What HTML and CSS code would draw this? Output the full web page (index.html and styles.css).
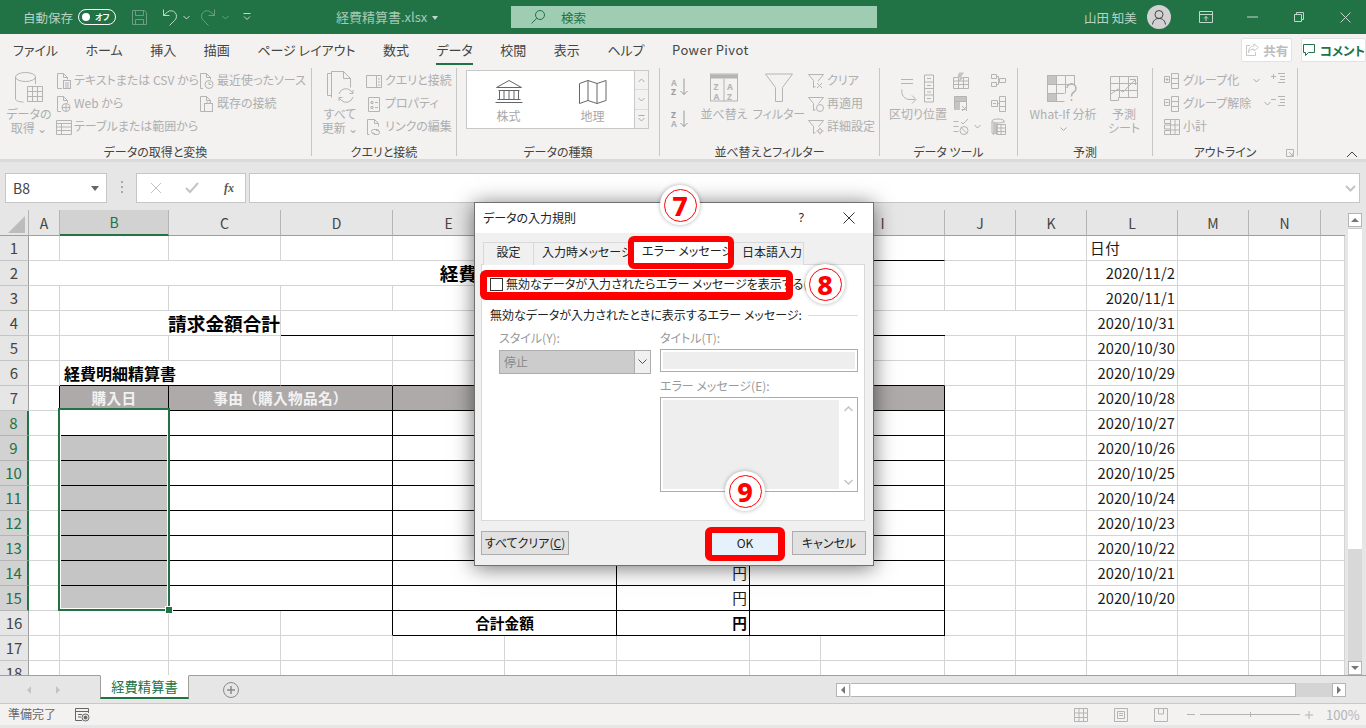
FILE: index.html
```html
<!DOCTYPE html>
<html lang="ja">
<head>
<meta charset="utf-8">
<title>経費精算書.xlsx - Excel</title>
<link rel="stylesheet" href="styles.css">
</head>
<body>
<div class="app">

<header class="titlebar">
  <span class="autosave">自動保存</span>
  <span class="toggle"><span class="dot"></span><span class="off">オフ</span></span>
  <svg class="tb save" width="17" height="17" viewBox="0 0 17 17"><path d="M1.5 1.5h12l2 2v12h-14zM4.5 1.5v5h8v-5M4.5 15.5v-5h8v5"/></svg>
  <svg class="tb undo" width="16" height="18" viewBox="0 0 16 18"><path d="M2.5 1.5v6h6M2.5 7.5l4-3.5a5.5 5.5 0 0 1 7 8.5l-5 5"/></svg>
  <svg class="chev undo-c" width="7" height="5" viewBox="0 0 7 5"><path d="M.5 1l3 3 3-3"/></svg>
  <svg class="tb redo" width="16" height="18" viewBox="0 0 16 18"><path d="M13.5 1.5v6h-6M13.5 7.5l-4-3.5a5.5 5.5 0 0 0-7 8.5l5 5"/></svg>
  <svg class="chev redo-c" width="7" height="5" viewBox="0 0 7 5"><path d="M.5 1l3 3 3-3"/></svg>
  <svg class="chev qat" width="8" height="8" viewBox="0 0 8 8"><path d="M.5.5h7M1 3.5l3 3 3-3"/></svg>
  <span class="filename">経費精算書.xlsx</span>
  <span class="file-caret"></span>
  <div class="search">
    <svg width="16" height="16" viewBox="0 0 16 16"><circle cx="10" cy="6" r="4.5"/><path d="M6.8 9.2L1.5 14.5"/></svg>
    <span>検索</span>
  </div>
  <span class="user">山田 知美</span>
  <span class="avatar"><svg width="16" height="16" viewBox="0 0 16 16"><circle cx="8" cy="5.5" r="4"/><path d="M1.5 15.5c.5-4 3-6 6.500-6s6 2 6.500 6"/></svg></span>
  <svg class="win w-opt" width="14" height="12" viewBox="0 0 14 12"><path d="M.5.5h13v11H.5zM.5 3.500h13M7 10V5.500M5 7.500l2-2 2 2"/></svg>
  <svg class="win w-min" width="11" height="2" viewBox="0 0 11 2"><path d="M0 1h11"/></svg>
  <svg class="win w-max" width="10" height="10" viewBox="0 0 10 10"><path d="M.5 2.500h7v7h-7zM2.500 2.500v-2h7v7h-2"/></svg>
  <svg class="win w-close" width="11" height="11" viewBox="0 0 11 11"><path d="M.5.5l10 10M10.500.5l-10 10"/></svg>
</header>

<nav class="tabs">
  <span>ファイル</span><span>ホーム</span><span>挿入</span><span>描画</span><span>ページ レイアウト</span><span>数式</span><span class="on">データ</span><span>校閲</span><span>表示</span><span>ヘルプ</span><span class="pp">Power Pivot</span>
  <span class="share"><svg width="14" height="14" viewBox="0 0 14 14"><path d="M9 .8l4.300 3.700L9 8V6C6 6 4.500 7 3.500 9.500 3.500 6 5 3 9 3zM5 2.500H1.500v10h9V9"/></svg>共有</span>
  <span class="comment"><svg width="14" height="14" viewBox="0 0 14 14"><path d="M1.500 1.500h11v8H6.500l-3 3v-3h-2z"/></svg>コメント</span>
</nav>

<section class="ribbon">
  <div class="group g1">
    <div class="body">
      <div class="big b-get">
        <svg class="i" width="30" height="35" viewBox="0 0 30 35"><path d="M1.500 6v22c0 1.500 3 3 8 3M21.500 6v7"/><ellipse cx="11.500" cy="6" rx="10" ry="4.500"/><path d="M13.500 15.500h15v15h-15zM13.500 20.500h15M13.500 25.500h15M18.500 15.500v15M23.500 15.500v15"/></svg>
        <span>データの</span><span>取得 ⌄</span>
      </div>
      <div class="col c-a">
        <div class="row"><svg class="i" width="18" height="18" viewBox="0 0 18 18"><path d="M7 16.500H2.500v-15h6l4 4v2M8.500 1.500v4h4"/><rect x="8.500" y="8.500" width="7" height="8"/><path d="M10 11h4M10 13h4M10 15h4"/></svg>テキストまたは CSV から</div>
        <div class="row"><svg class="i" width="18" height="18" viewBox="0 0 18 18"><path d="M6 16.500H2.500v-15h6l4 4v2M8.500 1.500v4h4"/><circle cx="11" cy="12.500" r="4"/><path d="M7 12.500h8M11 8.500v8"/></svg>Web から</div>
        <div class="row"><svg class="i" width="18" height="18" viewBox="0 0 18 18"><path d="M1.500 2.500h15v14h-15zM1.500 5.500h15M1.500 9h15M1.500 12.500h15M6.500 5.500v11"/></svg>テーブルまたは範囲から</div>
      </div>
      <div class="col c-b">
        <div class="row"><svg class="i" width="18" height="18" viewBox="0 0 18 18"><path d="M5 16.500H2.500v-15h6l4 4v2M8.500 1.500v4h4"/><circle cx="11" cy="12.500" r="4"/><path d="M11 10v2.500h2"/></svg>最近使ったソース</div>
        <div class="row"><svg class="i" width="18" height="18" viewBox="0 0 18 18"><path d="M6 16.500H2.500v-15h6l4 4v2M8.500 1.500v4h4"/><rect x="6.500" y="8.500" width="8" height="8"/><path d="M9 8.500v-2M12 8.500v-2"/></svg>既存の接続</div>
      </div>
    </div>
    <div class="glabel">データの取得と変換</div>
  </div>

  <div class="group g2">
    <div class="body">
      <div class="big b-refresh">
        <svg class="i" width="30" height="35" viewBox="0 0 30 35"><path d="M5.500 24.500H1.500v-22h4M5.500 26.500v-26h12l7 7v9M17.500.5v7h7"/><path d="M13 23a7 7 0 0 1 12-3l2 2M27 19v3.500h-3.500M27 26a7 7 0 0 1-12 3l-2-2M13 30v-3.500h3.500"/></svg>
        <span>すべて</span><span>更新 ⌄</span>
      </div>
      <div class="col c-q">
        <div class="row"><svg class="i" width="19" height="18" viewBox="0 0 19 18"><path d="M1.500 3.500h15v12h-15zM11.500 3.500v12M13 7h2M13 10h2M13 13h2"/></svg>クエリと接続</div>
        <div class="row"><svg class="i" width="19" height="18" viewBox="0 0 19 18"><path d="M3.500 2.500h11v14h-11zM6 6.500h2v2H6zM6 11.500h2v2H6zM10 7.500h3M10 12.500h3"/></svg>プロパティ</div>
        <div class="row"><svg class="i" width="19" height="18" viewBox="0 0 19 18"><path d="M4.500 16.500h-2v-15h7l4 4v3M9.500 1.500v4h4"/><path d="M9 14.500H7.500a2 2 0 0 1 0-4H11a2 2 0 0 1 2 2M10 11.500h1.500a2 2 0 0 1 0 4H9a2 2 0 0 1-2-2" transform="translate(1 1)"/></svg>リンクの編集</div>
      </div>
    </div>
    <div class="glabel">クエリと接続</div>
  </div>

  <div class="group g3">
    <div class="body">
      <div class="gallery">
        <div class="gitem">
          <svg width="28" height="24" viewBox="0 0 28 24"><path d="M14 .5L1.500 7.500h25zM4 7.500V8M3.500 10.500h21M4.500 10.500v9M9 10.500v9M14 10.500v9M19 10.500v9M23.500 10.500v9M2.500 19.500h23M.5 22.500h27"/></svg>
          <span>株式</span>
        </div>
        <div class="gitem">
          <svg width="28" height="24" viewBox="0 0 28 24"><path d="M.5 3.500l8.500-3 9 3 9-3v20l-9 3-9-3-8.500 3zM9 .5v20M18 3.500v20"/></svg>
          <span>地理</span>
        </div>
      </div>
      <div class="gscroll">
        <span><svg class="ch" width="7" height="5" viewBox="0 0 7 5"><path d="M.5 4l3-3 3 3"/></svg></span>
        <span><svg class="ch" width="7" height="5" viewBox="0 0 7 5"><path d="M.5 1l3 3 3-3"/></svg></span>
        <span><svg class="ch" width="7" height="7" viewBox="0 0 7 7"><path d="M.5.5h6M.5 3l3 3 3-3"/></svg></span>
      </div>
    </div>
    <div class="glabel">データの種類</div>
  </div>

  <div class="group g4">
    <div class="body">
      <div class="sort">
        <svg width="18" height="18" viewBox="0 0 18 18"><text x="0" y="8" class="st">A</text><text x="0" y="17" class="st dark">Z</text><path class="ar" d="M13 .5v16M9.500 13l3.500 3.500 3.500-3.500"/></svg>
        <svg width="18" height="18" viewBox="0 0 18 18"><text x="0" y="8" class="st dark">Z</text><text x="0" y="17" class="st">A</text><path class="ar" d="M13 .5v16M9.500 13l3.500 3.500 3.500-3.500"/></svg>
      </div>
      <div class="big b-sort">
        <svg width="28" height="30" viewBox="0 0 28 30"><rect x=".5" y=".5" width="27" height="27" fill="none" stroke="#b4b4b4"/><rect x="1" y="1" width="26" height="4" fill="#b4b4b4"/><path d="M14 5v23" stroke="#b4b4b4"/><text x="3.500" y="16" class="st">Z</text><text x="17" y="16" class="st">A</text><text x="3.500" y="26" class="st">A</text><text x="17" y="26" class="st">Z</text></svg>
        <span>並べ替え</span>
      </div>
      <div class="vsep"></div>
      <div class="big b-filter">
        <svg class="i" width="28" height="30" viewBox="0 0 28 30"><path d="M.5.5h27L17.500 14v14h-7V14z"/></svg>
        <span>フィルター</span>
      </div>
      <div class="col c-f">
        <div class="row"><svg class="i" width="19" height="18" viewBox="0 0 19 18"><path d="M1.500 2.500h15l-5 6v1M1.500 2.500l5 6v7l2-1M10 11l5 5M15 11l-5 5"/></svg>クリア</div>
        <div class="row"><svg class="i" width="19" height="18" viewBox="0 0 19 18"><path d="M1.500 2.500h15l-5 6M1.500 2.500l5 6v7l2-1"/><circle cx="13" cy="13" r="3.500"/></svg>再適用</div>
        <div class="row"><svg class="i" width="19" height="18" viewBox="0 0 19 18"><path d="M1.500 2.500h15l-5 6M1.500 2.500l5 6v7l2-1"/><circle cx="13" cy="13" r="2"/><path d="M13 9.500v1.500M13 15v1.500M9.500 13H11M15 13h1.500"/></svg>詳細設定</div>
      </div>
    </div>
    <div class="glabel">並べ替えとフィルター</div>
  </div>

  <div class="group g5">
    <div class="body">
      <div class="big b-split">
        <svg class="i" width="36" height="30" viewBox="0 0 36 30"><path d="M1 6h12M1 10h12M24.500 1.500h9v27h-9zM24.500 8.500h9M24.500 15h9M24.500 21.500h9M27 5h4M27 12h4M27 18.500h4M27 25h4M2 16a8 8 0 0 0 8 10h5M12 22l4 4-4 4"/></svg>
        <span>区切り位置</span>
      </div>
      <div class="col c-t1">
        <div class="row"><svg class="i" width="17" height="18" viewBox="0 0 17 18"><path d="M1.500 5.500h15v11h-15zM1.500 9h15M1.500 12.500h15M6.500 5.500v11M11.500 5.500v11"/><path class="fl" d="M7 .5h5L9 5h3l-6 6 2-5H5z"/></svg></div>
        <div class="row"><svg class="i" width="17" height="18" viewBox="0 0 17 18"><path d="M2.500 1.500h12v13h-5M2.500 1.500v13h4M2.500 6.500h12"/><rect class="fl" x="3" y="2" width="11" height="4"/><rect class="fl" x="3" y="7" width="5" height="8"/><path d="M10 11l5 5M15 11l-5 5"/></svg></div>
        <div class="row"><svg class="i" width="17" height="18" viewBox="0 0 17 18"><path d="M1.500 3.500h5M1.500 8.500h5M1.500 13.500h5M9 4l2 2 5-5"/><circle cx="12" cy="12.500" r="4"/><path d="M9.200 9.700l5.600 5.600"/></svg><svg class="ch caret-t" width="7" height="5" viewBox="0 0 7 5"><path d="M.5 1l3 3 3-3"/></svg></div>
      </div>
      <div class="col c-t2">
        <div class="row"><svg class="i" width="17" height="18" viewBox="0 0 17 18"><path d="M1.500 2.500h5v4h-5zM1.500 10.500h5v4h-5zM9.500 6.500h6v4h-6zM6.500 4.500h2v4M6.500 12.500h2v-4"/></svg></div>
        <div class="row"><svg class="i" width="17" height="18" viewBox="0 0 17 18"><path d="M1.500 5.500h6v6h-6zM9.500 1.500h6v15h-6zM9.500 6.500h6M9.500 11.500h6M7.500 8.500h2M3 8.500h3"/></svg></div>
        <div class="row"><svg class="i" width="17" height="18" viewBox="0 0 17 18"><ellipse cx="8" cy="3" rx="6" ry="2"/><path d="M2 3v12l2 2M14 3v2"/><rect class="fl" x="3" y="5" width="5" height="11"/><path d="M6.500 6.500h9v10h-9zM6.500 10h9M6.500 13.500h9M11 6.500v10"/></svg></div>
      </div>
    </div>
    <div class="glabel">データ ツール</div>
  </div>

  <div class="group g6">
    <div class="body">
      <div class="big b-what">
        <svg width="32" height="30" viewBox="0 0 32 30"><rect class="sq" x="0" y="0" width="9" height="9"/><rect class="sq" x="0" y="18" width="9" height="9"/><path fill="none" stroke="#b4b4b4" d="M.5.500h27v9h-9v9M.5.500v26h17M.5 9.500h18M.5 18.500h17M9.500.500v26M18.500.500v9M27.500.500v9"/><path fill="none" stroke="#b4b4b4" stroke-width="1.500" d="M20 13a4.500 4.500 0 1 1 7 4c-2 1-2.500 2-2.500 4.500M24.500 24v2"/></svg>
        <span>What-If 分析</span><span class="caretline"><svg class="ch" width="7" height="5" viewBox="0 0 7 5"><path d="M.5 1l3 3 3-3"/></svg></span>
      </div>
      <div class="big b-fcst">
        <svg class="i" width="28" height="26" viewBox="0 0 28 26"><path d="M.5.500h27v21h-19v3h-8zM.5 7.500h27M.5 14.500h27M9.500.500v21M18.500.500v21M1 18l7-5 5 3 12-12M20 3.500h5.500V9"/></svg>
        <span>予測</span><span>シート</span>
      </div>
    </div>
    <div class="glabel">予測</div>
  </div>

  <div class="group g7">
    <div class="body">
      <div class="col c-o1">
        <div class="row"><svg class="i" width="18" height="18" viewBox="0 0 18 18"><path d="M1.500 4.500h5v6h-5zM4 7.500h0M2.500 7.500h3M4 6v3M8.500 1.500h7v15h-7zM8.500 6.500h7M8.500 11.500h7"/></svg>グループ化<svg class="ch caret-o1" width="7" height="5" viewBox="0 0 7 5"><path d="M.5 1l3 3 3-3"/></svg></div>
        <div class="row"><svg class="i" width="18" height="18" viewBox="0 0 18 18"><path d="M1.500 4.500h5v6h-5zM2.500 7.500h3M8.500 1.500h7v15h-7zM8.500 6.500h7M8.500 11.500h7"/></svg>グループ解除<svg class="ch caret-o2" width="7" height="5" viewBox="0 0 7 5"><path d="M.5 1l3 3 3-3"/></svg></div>
        <div class="row"><svg class="i" width="18" height="18" viewBox="0 0 18 18"><path d="M1.500 1.500h6v4h-6zM1.500 7h6v4h-6zM1.500 12.500h6v4h-6zM7.500 1.500h9v15h-9zM7.500 7h9M7.500 12h9M12 1.500v15"/></svg>小計</div>
      </div>
      <div class="col c-o2">
        <div class="row"><svg class="i" width="15" height="14" viewBox="0 0 15 14"><path d="M0 4.500h5M2.500 2v5M7 1.500h7M9 4.500h5M9 7.500h5M7 10.500h7"/></svg></div>
        <div class="row"><svg class="i" width="15" height="14" viewBox="0 0 15 14"><path d="M0 4.500h5M7 1.500h7M9 4.500h5M9 7.500h5M7 10.500h7"/></svg></div>
      </div>
    </div>
    <div class="glabel">アウトライン</div>
    <svg class="launcher" width="8" height="8" viewBox="0 0 8 8"><path d="M.5 7.500v-7h7v7zM3 3l4 4M7 4v3H4"/></svg>
  </div>
  <svg class="collapse" width="12" height="7" viewBox="0 0 12 7"><path d="M1 6l5-5 5 5"/></svg>
</section>

<section class="fbar">
  <div class="namebox"><span>B8</span><i></i></div>
  <div class="dots"><i></i><i></i><i></i></div>
  <div class="fxbox">
    <svg width="12" height="12" viewBox="0 0 12 12"><path d="M1 1l10 10M11 1L1 11"/></svg>
    <svg width="14" height="12" viewBox="0 0 14 12"><path d="M1 6l4 4 8-9" stroke-width="2"/></svg>
    <em>fx</em>
  </div>
  <div class="finput"><svg class="ch" width="11" height="7" viewBox="0 0 11 7"><path d="M1 1l4.500 4.500L10 1" stroke-width="2"/></svg></div>
</section>

<section class="sheetrow">
  <div class="gridwrap">
    <table class="grid">
      <colgroup><col class="w29"><col class="w31"><col class="w109"><col class="w112"><col class="w112"><col class="w112"><col class="w112"><col class="w133"><col class="w71"><col class="w124"><col class="w71"><col class="w71"><col class="w91"><col class="w71"><col class="w72"><col class="w24"></colgroup>
      <tr class="ch-row"><th class="corner"><svg width="18" height="17" viewBox="0 0 18 17"><path d="M17 0v17H0z" fill="#bcbcbc"/></svg></th><th>A</th><th class="cur">B</th><th>C</th><th>D</th><th>E</th><th>F</th><th>G</th><th>H</th><th>I</th><th>J</th><th>K</th><th>L</th><th>M</th><th>N</th><th></th></tr>
      <tr><th>1</th><td></td><td></td><td></td><td></td><td></td><td></td><td></td><td></td><td class="bb"></td><td></td><td></td><td class="pad">日付</td><td></td><td></td><td></td></tr>
      <tr><th>2</th><td colspan="9" class="title">経費精算書</td><td></td><td></td><td class="num">2020/11/2</td><td></td><td></td><td></td></tr>
      <tr><th>3</th><td></td><td></td><td></td><td></td><td></td><td></td><td></td><td></td><td></td><td></td><td></td><td class="num">2020/11/1</td><td></td><td></td><td></td></tr>
      <tr><th>4</th><td></td><td colspan="2" class="total">請求金額合計</td><td colspan="6" class="bb nr"></td><td colspan="2"></td><td class="num">2020/10/31</td><td></td><td></td><td></td></tr>
      <tr><th>5</th><td></td><td></td><td></td><td></td><td></td><td></td><td></td><td></td><td></td><td></td><td></td><td class="num">2020/10/30</td><td></td><td></td><td></td></tr>
      <tr><th>6</th><td></td><td colspan="2" class="bb sub">経費明細精算書</td><td class="bb"></td><td class="bb"></td><td class="bb"></td><td class="bb"></td><td class="bb"></td><td class="bb"></td><td></td><td></td><td class="num">2020/10/29</td><td></td><td></td><td></td></tr>
      <tr><th>7</th><td class="br"></td><td class="hd">購入日</td><td colspan="2" class="hd">事由（購入物品名）</td><td colspan="2" class="hd"></td><td class="hd"></td><td colspan="2" class="hd"></td><td></td><td></td><td class="num">2020/10/28</td><td></td><td></td><td></td></tr>
      <tr class="sel"><th>8</th><td class="br"></td><td class="box"></td><td colspan="2" class="box"></td><td colspan="2" class="box"></td><td class="box"></td><td colspan="2" class="box"></td><td></td><td></td><td class="num">2020/10/27</td><td></td><td></td><td></td></tr>
      <tr class="sel"><th>9</th><td class="br"></td><td class="box fillc"></td><td colspan="2" class="box"></td><td colspan="2" class="box"></td><td class="box"></td><td colspan="2" class="box"></td><td></td><td></td><td class="num">2020/10/26</td><td></td><td></td><td></td></tr>
      <tr class="sel"><th>10</th><td class="br"></td><td class="box fillc"></td><td colspan="2" class="box"></td><td colspan="2" class="box"></td><td class="box"></td><td colspan="2" class="box"></td><td></td><td></td><td class="num">2020/10/25</td><td></td><td></td><td></td></tr>
      <tr class="sel"><th>11</th><td class="br"></td><td class="box fillc"></td><td colspan="2" class="box"></td><td colspan="2" class="box"></td><td class="box"></td><td colspan="2" class="box"></td><td></td><td></td><td class="num">2020/10/24</td><td></td><td></td><td></td></tr>
      <tr class="sel"><th>12</th><td class="br"></td><td class="box fillc"></td><td colspan="2" class="box"></td><td colspan="2" class="box"></td><td class="box"></td><td colspan="2" class="box"></td><td></td><td></td><td class="num">2020/10/23</td><td></td><td></td><td></td></tr>
      <tr class="sel"><th>13</th><td class="br"></td><td class="box fillc"></td><td colspan="2" class="box"></td><td colspan="2" class="box"></td><td class="box"></td><td colspan="2" class="box"></td><td></td><td></td><td class="num">2020/10/22</td><td></td><td></td><td></td></tr>
      <tr class="sel"><th>14</th><td class="br"></td><td class="box fillc"></td><td colspan="2" class="box"></td><td colspan="2" class="box"></td><td class="box num">円</td><td colspan="2" class="box"></td><td></td><td></td><td class="num">2020/10/21</td><td></td><td></td><td></td></tr>
      <tr class="sel"><th>15</th><td class="br"></td><td class="box fillc"></td><td colspan="2" class="box"></td><td colspan="2" class="box"></td><td class="box num">円</td><td colspan="2" class="box"></td><td></td><td></td><td class="num">2020/10/20</td><td></td><td></td><td></td></tr>
      <tr><th>16</th><td></td><td></td><td></td><td class="br"></td><td colspan="2" class="box strong">合計金額</td><td class="box num strong">円</td><td colspan="2" class="box"></td><td></td><td></td><td></td><td></td><td></td><td></td></tr>
      <tr><th>17</th><td></td><td></td><td></td><td></td><td></td><td></td><td></td><td></td><td></td><td></td><td></td><td></td><td></td><td></td><td></td></tr>
      <tr><th>18</th><td></td><td></td><td></td><td></td><td></td><td></td><td></td><td></td><td></td><td></td><td></td><td></td><td></td><td></td><td></td></tr>
    </table>
    <div class="selection"><i></i></div>
  </div>
  <div class="vscroll">
    <span class="sbtn"><b class="tri up"></b></span>
    <span class="vthumb"></span>
    <span class="sbtn"><b class="tri down"></b></span>
  </div>
</section>

<section class="tabbar">
  <span class="nav"><b class="tri left"></b></span>
  <span class="nav"><b class="tri right"></b></span>
  <span class="sheet-tab">経費精算書</span>
  <svg class="plus" width="18" height="18" viewBox="0 0 18 18"><circle cx="9" cy="9" r="7.500"/><path d="M5 9h8M9 5v8" stroke-width="1.500"/></svg>
  <div class="hscroll">
    <span class="sbtn"><b class="tri left dk"></b></span>
    <span class="hthumb"></span>
    <span class="htrack"></span>
    <span class="sbtn"><b class="tri right dk"></b></span>
  </div>
</section>

<footer class="status">
  <span class="ready">準備完了</span>
  <svg class="macro" width="15" height="15" viewBox="0 0 15 15"><path d="M7 13.500H.5V1.500h13V6M.5 4.500h13M3 7.500h4M3 10h3"/><circle cx="10.500" cy="10.500" r="3.500"/><circle cx="10.500" cy="10.500" r="1.500" fill="#666"/></svg>
  <svg class="view v1" width="14" height="14" viewBox="0 0 14 14"><path d="M.5.5h13v13H.5zM.5 5h13M.5 9.500h13M5 .5v13M9.500.5v13"/></svg>
  <svg class="view v2" width="14" height="14" viewBox="0 0 14 14"><path d="M.5.5h13v13H.5zM3.500 3.500h7v7h-7zM5 5.500h4M5 7.500h4"/></svg>
  <svg class="view v3" width="14" height="14" viewBox="0 0 14 14"><path d="M.5.5h13v13H.5zM4.500.5v5.500h5V.5"/></svg>
  <span class="zoomctl">
    <i class="zminus"></i>
    <span class="zline"><i></i></span>
    <svg class="view" width="8" height="8" viewBox="0 0 8 8"><path d="M0 4h8M4 0v8"/></svg>
  </span>
  <span class="pct">100%</span>
</footer>

<div class="dialog">
  <div class="dtitle">
    <span>データの入力規則</span>
    <b class="help">?</b>
    <svg width="12" height="12" viewBox="0 0 12 12"><path d="M.5.5l11 11M11.500.5l-11 11"/></svg>
  </div>
  <div class="dtabs">
    <span>設定</span><span>入力時メッセージ</span><span class="active">エラー メッセージ</span><span>日本語入力</span>
  </div>
  <div class="pane">
    <label class="check"><i></i><span>無効なデータが入力されたらエラー メッセージを表示する(<u>S</u>)</span></label>
    <div class="legend"><span>無効なデータが入力されたときに表示するエラー メッセージ:</span><i></i></div>
    <div class="fields">
      <div class="fcol">
        <span class="flabel">スタイル(Y):</span>
        <div class="select"><span>停止</span><b><svg class="dk" width="9" height="6" viewBox="0 0 9 6"><path d="M.5.5l4 4 4-4"/></svg></b></div>
      </div>
      <div class="fcol">
        <span class="flabel">タイトル(T):</span>
        <div class="input"></div>
        <span class="flabel second">エラー メッセージ(E):</span>
        <div class="textarea"><span class="tsb"><svg class="ch" width="9" height="6" viewBox="0 0 9 6"><path d="M.5 5l4-4 4 4" stroke-width="1.500"/></svg><svg class="ch" width="9" height="6" viewBox="0 0 9 6"><path d="M.5 1l4 4 4-4" stroke-width="1.500"/></svg></span></div>
      </div>
    </div>
  </div>
  <div class="dbuttons">
    <button class="btn clear">すべてクリア(<u>C</u>)</button>
    <button class="btn ok">OK</button>
    <button class="btn cancel">キャンセル</button>
  </div>
  <span class="frame f-tab"></span>
  <span class="frame f-check"></span>
  <span class="frame f-ok"></span>
  <span class="marker m7"><span>7</span></span>
  <span class="marker m8"><span>8</span></span>
  <span class="marker m9"><span>9</span></span>
</div>

</div>
</body>
</html>
```
FILE: styles.css
```css
*{box-sizing:border-box}
html,body{margin:0;padding:0;height:728px;overflow:hidden}
body{font:12px/1.2 "Noto Sans CJK JP","Noto Sans",sans-serif;font-feature-settings:"palt";background:#e6e6e6;color:#444}
.app{position:relative;width:1366px;height:728px;display:flex;flex-direction:column;overflow:hidden}
svg{display:block;flex:none;fill:none}

/* title bar */
.titlebar{height:34px;flex:none;background:#217346;display:flex;align-items:center;color:#b8d2c4;font-size:12.5px;padding-left:23px}
.autosave{width:48px;white-space:nowrap;letter-spacing:0}
.toggle{margin-left:7px;width:38px;height:16px;border:1.5px solid #fff;border-radius:8px;display:flex;align-items:center;padding-left:3px;color:#fff;font-size:8px;font-weight:700}
.dot{width:8px;height:8px;border-radius:50%;background:#fff;margin-right:5px}
.tb{stroke:#6c9e84}
.save{margin-left:15px}
.undo{margin-left:13px;stroke:#c3d8cc}
.undo-c{margin-left:6px;stroke:#c3d8cc}
.redo{margin-left:11px}
.redo-c{margin-left:5px;stroke:#6c9e84}
.qat{margin-left:14px;stroke:#c3d8cc}
.filename{margin-left:85px;width:90px;white-space:nowrap;color:#a8c9b7;font-size:13px}
.file-caret{margin-left:6px;border:3px solid transparent;border-top:4px solid #c3d8cc;margin-top:4px}
.search{margin-left:73px;width:366px;height:22px;background:#9fcdb3;display:flex;align-items:center;padding-left:19px;color:#217346}
.search svg{stroke:#217346;margin-right:15px}
.user{margin-left:207px;width:54px;white-space:nowrap;color:#b8d2c4;font-size:12.5px}
.avatar{margin-left:9px;width:24px;height:24px;border-radius:50%;background:#d2d2d2;display:flex;align-items:center;justify-content:center;stroke:#444}
.avatar svg{stroke:#444}
.win{stroke:#c3d8cc}
.w-opt{margin-left:28px}
.w-min{margin-left:34px}
.w-max{margin-left:36px}
.w-close{margin-left:36px}

/* tab strip */
.tabs{height:32px;flex:none;background:#f3f2f1;display:flex;align-items:center;gap:27.500px;padding-left:13px;font-size:13px;color:#444;white-space:nowrap}
.tabs .on{position:relative}
.tabs .on::after{content:"";position:absolute;left:0;right:0;bottom:-7px;height:2px;background:#217346}
.pp{letter-spacing:.4px}
.share,.comment{display:flex;align-items:center;gap:4px;height:24px;border:1px solid #e2e2e2;border-radius:2px;background:#fff;font-size:12.500px;font-weight:700;justify-content:center}
.share{margin-left:465px;width:60px;color:#bdbdbd;stroke:#c8c8c8}
.share svg{stroke:#c8c8c8}
.comment{margin-left:-19px;width:74px;color:#217346}
.comment svg{stroke:#217346}

/* ribbon */
.ribbon{position:relative;height:96px;flex:none;background:#f3f2f1;padding-top:2px;display:flex;align-items:flex-start;border-bottom:3px solid #dadada;color:#aeaeae}
.group{position:relative;height:88px;border-right:1px solid #c8c6c4;display:flex;flex-direction:column;flex:none}
.g1{width:312px}.g2{width:145px}.g3{width:203px}.g4{width:220px}.g5{width:138px}.g6{width:135px}.g7{width:145px}
.body{height:76px;display:flex;flex:none}
.glabel{height:12px;line-height:16px;text-align:center;color:#444;white-space:nowrap;font-size:12px}
.big{display:flex;flex-direction:column;align-items:center;padding-top:3px;line-height:14px;white-space:nowrap;flex:none}
.big svg{margin-bottom:1px;height:35px}
.col{display:flex;flex-direction:column;padding-top:1px;flex:none}
.row{height:23px;display:flex;align-items:center;gap:1px;white-space:nowrap;position:relative}
.i{stroke:#b4b4b4}
.i .fl,.fl{fill:#c4c4c4;stroke:none}
.ch{stroke:#aaa}
.caret-t{margin-left:4px}
.caret-o1{margin-left:12px}
.caret-o2{margin-left:11px}
.b-get{width:52px;margin-left:3px}
.c-a{width:143px}
.c-b{width:110px}
.b-refresh{width:52px;margin-left:2px}
.b-refresh svg{margin-left:2px}
.c-q{margin-left:-1px;width:88px}
.gallery{margin:2px 0 0 9px;width:169px;height:59px;background:#fff;border:1px solid #c8c8c8;display:flex}
.gitem{width:83px;display:flex;flex-direction:column;align-items:center;padding-top:9px;color:#a8a8a8;font-size:12px}
.gitem svg{stroke:#666;margin-bottom:5px}
.gallery .gitem:last-child{margin-left:1px}
.gscroll{margin-top:2px;width:14px;height:59px;display:flex;flex-direction:column;border:1px solid #c8c8c8;border-left:0;background:#f3f2f1}
.gscroll span{flex:1;display:flex;align-items:center;justify-content:center;border-bottom:1px solid #dcdcdc}
.gscroll span:last-child{border-bottom:0}
.sort{margin-left:11px;padding-top:10px;display:flex;flex-direction:column;gap:14px;width:18px}
.st{font:700 8.500px "Noto Sans",sans-serif;fill:#b4b4b4}
.st.dark{fill:#9a9a9a}
.ar{stroke:#9a9a9a;fill:none}
.b-sort{margin-left:13px;width:44px}
.vsep{width:1px;height:59px;margin:6px 5px 0 5px;background:#d0d0d0}
.b-filter{width:56px;margin-left:-5px}
.c-f{width:80px}
.b-split{width:68px;margin-left:4px}
.b-split svg{width:36px}
.c-t1{width:38px}
.c-t2{width:17px}
.b-what{width:80px;margin-left:5px}
.b-what svg{height:35px;padding-top:3px}
.sq{fill:#c4c4c4}
.caretline{height:14px;display:flex;align-items:center}
.b-fcst{width:42px}
.b-fcst svg{height:35px;padding-top:1px}
.c-o1{margin-left:10px;width:108px}
.c-o1 .row{gap:2px}
.c-o2 .row{align-items:flex-start;padding-top:3px}
.launcher{position:absolute;right:3px;bottom:-1px;stroke:#b4b4b4}
.collapse{position:absolute;right:8px;top:85px;stroke:#444}

/* formula bar */
.fbar{height:48px;flex:none;background:#e6e6e6;display:flex;padding-top:11px;align-items:flex-start}
.namebox{margin-left:5px;width:102px;height:30px;background:#fff;border:1px solid #c6c6c6;display:flex;align-items:center;justify-content:space-between;padding:0 7px;font-size:14px;color:#444}
.namebox i{border:4px solid transparent;border-top:5px solid #666;margin-top:4px}
.dots{margin:8px 12px 0 13px;width:4px;display:flex;flex-direction:column;gap:3px;align-items:center}
.dots i{width:2px;height:2px;background:#a8a8a8}
.fxbox{width:110px;height:30px;background:#fff;border:1px solid #c6c6c6;display:flex;align-items:center;padding-left:13px;gap:23px}
.fxbox svg{stroke:#c4c4c4}
.fxbox em{font:italic 700 12px "Liberation Serif",serif;color:#555;margin-left:2px}
.finput{margin-left:3px;width:1111px;height:30px;background:#fff;border:1px solid #c6c6c6;display:flex;align-items:center;justify-content:flex-end;padding-right:3px}
.finput .ch{stroke:#c4c4c4}

/* sheet */
.sheetrow{height:465px;flex:none;display:flex}
.gridwrap{position:relative;width:1345px;height:465px;overflow:hidden;background:#fff}
.grid{border-collapse:separate;border-spacing:0;table-layout:fixed;width:1345px;font-size:14.670px;font-feature-settings:normal;color:#1a1a1a}
.w29{width:29px}.w31{width:31px}.w109{width:109px}.w112{width:112px}.w133{width:133px}.w71{width:71px}.w124{width:124px}.w91{width:91px}.w72{width:72px}.w24{width:24px}
.grid th,.grid td{height:25px;padding:0;line-height:24px;overflow:hidden;white-space:nowrap}
.grid td{border-right:1px solid #d4d4d4;border-bottom:1px solid #d4d4d4}
.grid th{background:#e6e6e6;font-weight:400;font-size:15px;color:#444;border-right:1px solid #9f9f9f;border-bottom:1px solid #c4c4c4}
.ch-row th{border-right:1px solid #b4b4b4;border-bottom:1px solid #9f9f9f;font-size:14px}
.ch-row th:last-child{border-right:0}
.ch-row{background:#e6e6e6}
.corner svg{margin:4px 0 0 8px}
.cur{background:#d2d2d2!important;color:#217346!important;border-bottom:2px solid #217346!important}
.sel th{background:#d2d2d2;color:#217346;border-right:2px solid #217346;border-bottom-color:#b4b4b4}
.grid .bb{border-bottom:1px solid #000}
.grid .br{border-right:1px solid #000}
.grid .nr{border-right:0}
.grid .box{border-right:1px solid #000;border-bottom:1px solid #000}
.grid .hd{border-right:1px solid #000;border-bottom:1px solid #000;background:#aeaaaa;color:#f2f2f2;font-weight:700;text-align:center;letter-spacing:.3px}
.grid .fillc{background:#c5c5c5}
.pad{padding-left:3px!important;letter-spacing:.5px}
.grid .num{text-align:right;padding-right:2px;letter-spacing:.1px}
.title{font-size:18.670px;font-weight:700;text-align:center;color:#000}
.total{font-size:18.670px;font-weight:700;text-align:right;color:#000}
.sub{font-size:16px;font-weight:700;padding-left:4px!important;color:#000}
.strong{font-weight:700;text-align:center;color:#000}
.selection{position:absolute;left:58px;top:198px;width:112px;height:203px;border:2px solid #217346;box-shadow:inset 0 0 0 1px #fff;pointer-events:none}
.selection i{position:absolute;right:-4px;bottom:-4px;width:6px;height:6px;background:#217346;outline:1px solid #fff}
.vscroll{width:21px;height:465px;padding:3px 4px 0 3px;display:flex;flex-direction:column;background:#e6e6e6}
.sbtn{width:14px;height:14px;flex:none;background:#fff;border:1px solid #b4b4b4;display:flex;align-items:center;justify-content:center}
.vthumb{margin-top:1px;height:435px;background:linear-gradient(#fff 0,#fff 74%,#d8d8d8 74%);border:1px solid #c8c8c8;border-width:1px 0 0}
.tri{display:block;width:0;height:0;border:4px solid transparent}
.up{border-bottom:4px solid #777;border-top:0}
.down{border-top:4px solid #777;border-bottom:0}
.left{border-right:4px solid #c4c4c4;border-left:0}
.right{border-left:4px solid #c4c4c4;border-right:0}
.left.dk{border-right-color:#777}
.right.dk{border-left-color:#777}

/* sheet tabs */
.tabbar{height:29px;flex:none;background:#e6e6e6;border-top:1px solid #9f9f9f;border-bottom:1px solid #c8c8c8;display:flex;position:relative}
.nav{width:29px;height:27px;display:flex;align-items:center;justify-content:center;margin-left:0;padding-left:0}
.nav:first-child{margin-left:14px}
.sheet-tab{margin-left:28px;width:89px;height:24px;margin-top:-1px;background:#fff;border:1px solid #9f9f9f;border-top:1px solid #fff;border-bottom:2px solid #217346;color:#217346;display:flex;align-items:center;justify-content:center;font-size:13.300px;font-feature-settings:normal;letter-spacing:0}
.plus{margin:5px 0 0 33px;stroke:#8a8a8a}
.hscroll{position:absolute;left:836px;top:7px;width:510px;height:14px;display:flex}
.hthumb{width:445px;background:#fff;border:1px solid #b4b4b4;border-width:1px 1px 1px 0;margin-left:1px}
.htrack{flex:1;background:#d4d4d4}

/* status */
.status{height:21px;flex:none;background:#f3f2f1;display:flex;align-items:center;padding-left:8px;color:#666;font-size:12px;font-feature-settings:normal}
.ready{width:50px;white-space:nowrap}
.macro{margin-left:17px;stroke:#666}
.view{stroke:#b4b4b4}
.v1{margin-left:984px}
.v2{margin-left:26px}
.v3{margin-left:26px}
.zoomctl{margin-left:19px;display:flex;align-items:center}
.zminus{width:8px;height:1px;background:#b4b4b4}
.zline{margin:0 5px;width:100px;height:1px;background:#b4b4b4;position:relative}
.zline i{position:absolute;left:50px;top:-2px;width:1px;height:5px;background:#b4b4b4}
.pct{margin-left:13px;color:#b4b4b4;font-size:13px}

/* dialog */
.dialog{position:absolute;left:474px;top:202px;width:400px;height:364px;background:#f0f0f0;border:1px solid #707070;box-shadow:0 2px 20px rgba(0,0,0,.55);color:#222;display:flex;flex-direction:column}
.dtitle{height:30px;flex:none;background:#fff;display:flex;align-items:center;padding-left:8px;position:relative}
.dtitle span{flex:1}
.dtitle svg{stroke:#333;margin-right:18px}
.help{font-weight:400;font-size:12px;margin-right:39px;font-family:"Noto Sans",sans-serif}
.dtabs{height:31px;flex:none;padding:9px 0 0 8px;display:flex;position:relative;z-index:1}
.dtabs span{height:23px;padding:2px 8px 0;border:1px solid #d9d9d9;border-left:0;border-bottom:0;text-align:center;background:#f0f0f0;white-space:nowrap}
.dtabs span:first-child{width:51px;border-left:1px solid #d9d9d9}
.dtabs span:nth-child(2){width:100px}
.dtabs span:nth-child(3){width:100px;margin-top:-2px;height:25px;background:#fff;padding-top:4px;border:0}
.dtabs span:nth-child(4){width:70px}
.pane{margin-left:6px;width:384px;height:257px;flex:none;border:1px solid #d9d9d9;background:#fff;padding:12px 6px 0 8px}
.check{height:15px;display:flex;align-items:center;gap:3px;white-space:nowrap}
.check i{width:13px;height:13px;border:1px solid #333;background:#fff;flex:none}
.legend{margin-top:15px;height:16px;display:flex;align-items:center;white-space:nowrap}
.legend i{flex:1;height:1px;background:#dcdcdc;margin-left:6px}
.fields{margin:7px 0 0 9px;display:flex;gap:9px}
.fcol{display:flex;flex-direction:column;width:152px}
.fcol:last-child{width:198px}
.flabel{height:16px;line-height:16px;color:#9a9a9a;white-space:nowrap}
.second{margin-top:6px}
.select{margin-top:4px;height:24px;background:#ccc;border:1px solid #adadad;display:flex;align-items:center;justify-content:space-between;color:#8a8a8a;padding-left:4px}
.select b{width:16px;height:22px;background:#f0f0f0;border-left:1px solid #adadad;display:flex;align-items:center;justify-content:center}
.select svg{stroke:#555}
.input{margin-top:3px;height:23px;border:1px solid #adadad;background:#eee;box-shadow:inset 0 0 0 2px #fff}
.textarea{margin-top:3px;height:95px;border:1px solid #adadad;background:#eee;box-shadow:inset 0 0 0 2px #fff;display:flex;justify-content:flex-end}
.tsb{width:18px;height:93px;background:#fff;display:flex;flex-direction:column;justify-content:space-between;align-items:center;padding:8px 0 6px}
.tsb .ch{stroke:#c4c4c4}
.dbuttons{padding:10px 7px 0 6px;display:flex;gap:14px}
.btn{height:24px;padding:0;border:1px solid #adadad;background:#e1e1e1;color:#222;font:12px/1 "Noto Sans CJK JP","Noto Sans",sans-serif;font-feature-settings:"palt";white-space:nowrap}
.clear{width:88px;margin-right:auto}
.ok{width:66px;background:#e5f1fb;border-color:#e5f1fb}
.cancel{width:74px}
.frame{position:absolute;border:6px solid #f00;border-radius:6px;z-index:2;pointer-events:none}
.f-tab{left:153px;top:33px;width:106px;height:33px}
.f-check{left:5px;top:67px;width:313px;height:30px;border-width:7px 7px 8px}
.f-ok{left:230px;top:324px;width:80px;height:34px;border-width:6px 7px}
.marker{position:absolute;z-index:3;width:40px;height:40px;border-radius:50%;background:#fff;box-shadow:0 0 4px rgba(0,0,0,.3);display:flex;align-items:center;justify-content:center}
.marker span{width:33px;height:33px;border-radius:50%;border:1.500px solid #f00;display:flex;align-items:center;justify-content:center;color:#f00;font:800 27px/1 "Noto Sans","Open Sans",sans-serif}
.m7{left:185px;top:-18px}
.m8{left:330px;top:61px}
.m9{left:250px;top:268px}
```
